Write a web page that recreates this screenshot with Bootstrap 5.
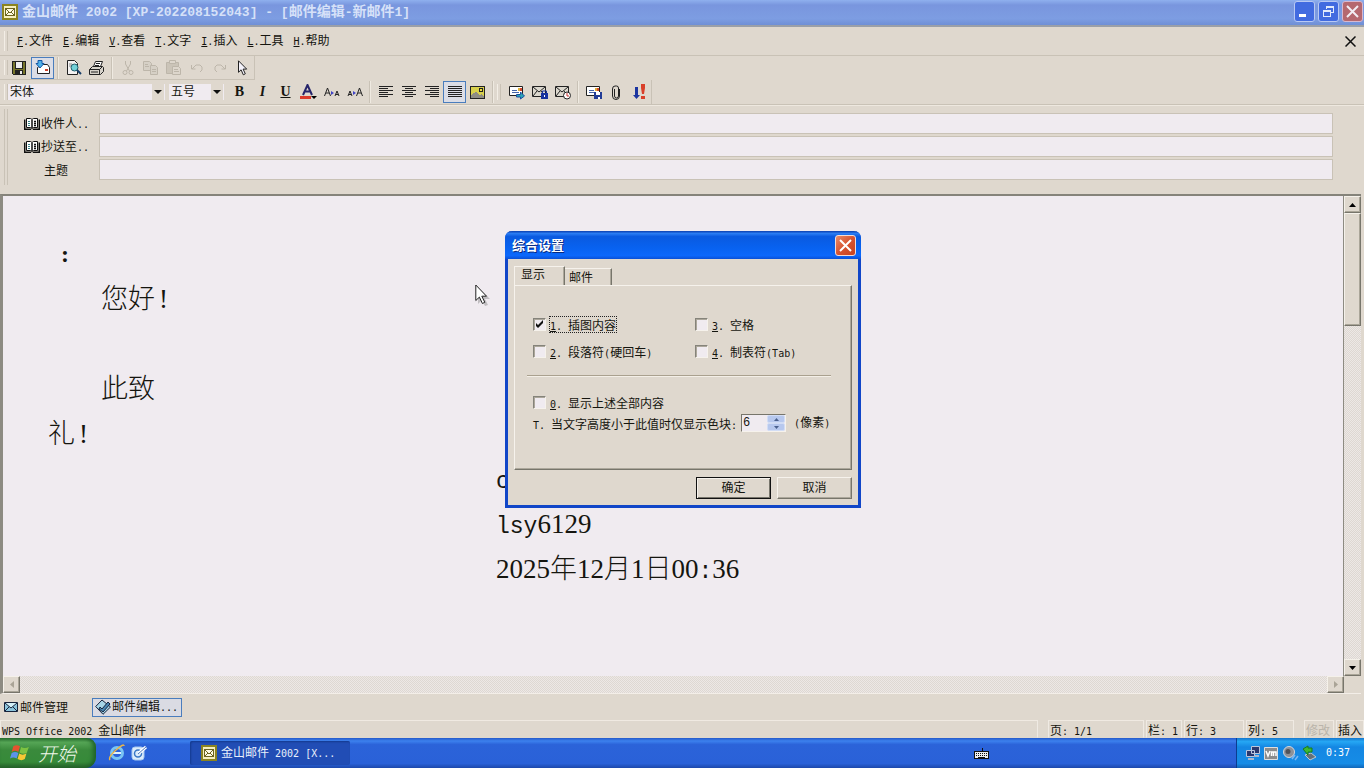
<!DOCTYPE html>
<html lang="zh-CN">
<head>
<meta charset="utf-8">
<meta name="viewport" content="width=device-width, initial-scale=1">
<title>金山邮件 2002</title>
<link href="https://cdn.jsdelivr.net/npm/bootstrap@5.3.0/dist/css/bootstrap.min.css" rel="stylesheet">
<style>
:root{--face:#dfd8ce;--paper:#f0ebf0;--line:#c9c2b6;--ink:#15150f}
body{background:var(--face);color:var(--ink);font:12px/16px "Noto Sans CJK SC",sans-serif;overflow:hidden}
button,input,select{font:inherit;color:inherit;border:0;padding:0;border-radius:0;background:none}
svg{display:block;flex:none}
.px{shape-rendering:crispEdges}
.la{font-family:"DejaVu Sans Mono","Liberation Mono",monospace;font-size:10px;white-space:pre}
/* window frame */
.title-main{height:27px;background:linear-gradient(#8fb0ee,#7996de 20%,#7d9de2 75%,#6f8fd6);border-bottom:2px solid #9a9fa8;color:#d6e1f8;padding:0 1px 2px 2px;font-size:14px;font-weight:700}
.title-main .la{font-family:"Liberation Mono",monospace;font-size:13px}
.cap{width:21px;height:21px;border:1px solid #b9c9f3;border-radius:3px;background:#426be0}
.cap-x{background:#b5686f;border-color:#d7b8cf}
.menu-row{height:29px;border-bottom:1px solid var(--line);padding:0 4px 0 4px}
.menu-row a{color:inherit;text-decoration:none;white-space:nowrap}
.menu-row nav{gap:10px;padding-left:9px}
.grip{width:4px;border-left:1px solid #f3eee6;border-right:1px solid var(--line);align-self:stretch;margin:4px 0}
.bars{border-bottom:1px solid var(--line);box-shadow:0 1px #eee8df}
.tools{height:24px;border-bottom:1px solid var(--line);border-right:1px solid var(--line);padding-left:4px}
.tool{width:23px;height:22px;display:flex;align-items:center;justify-content:center;flex:none}
.tool.on{background:#dbdde6;border:1px solid #4a7dbd}
.tool.off{color:#bdb6aa}
.vsep{width:1px;height:22px;background:#efeae1;border-left:1px solid var(--line);box-sizing:content-box;margin:0 3px}
.combo{position:relative;background:var(--paper);height:16px}
.combo select{appearance:none;width:100%;height:16px;line-height:14px;padding:0 14px 2px 2px;display:block}
.combo::after{content:"";position:absolute;right:1px;top:0;width:12px;height:16px;background:var(--face);pointer-events:none}
.combo::before{content:"";position:absolute;z-index:1;right:3px;top:6px;border:4px solid transparent;border-top-color:#111;border-bottom:0}
.glyph{font-family:"Liberation Serif",serif;font-size:14px;font-weight:700;line-height:16px}
/* addresses */
.addr{height:89px;padding:4px 31px 9px 4px}
.addr .grip{margin:0;border-color:#f3eee6 var(--line)}
.addr-grid{display:grid;grid-template-columns:75px 1fr;align-content:start;gap:2px 0;padding:4px 0 0 16px}
.addr-grid input{height:21px;width:100%;background:var(--paper);border:1px solid var(--line)}
.addr-grid button,.addr-grid label{height:21px;display:flex;align-items:center;gap:1px;white-space:nowrap}
/* editor */
.editor{margin:0 3px 0 0;border-top:2px solid #85837a;border-left:3px solid #8d8b82;border-bottom:1px solid #f3eee8;min-height:0}
.paper{background:var(--paper);font-family:"Liberation Serif","Noto Sans CJK SC",serif;font-size:27px;line-height:45px;font-weight:300;padding:36px 0 0 45px;overflow:hidden;border-right:1px solid #8d8b82}
.paper p{margin:0;height:45px;white-space:pre}
.paper .tt{font-family:"Liberation Mono",monospace;font-size:23px}
.paper .salute{font-size:24px;padding-left:13px;font-weight:700}
.ind{padding-left:53px}
.sign{padding-left:448px}
.track{background:repeating-conic-gradient(#ded8d2 0 25%,#ede8e6 0 50%) 0 0/2px 2px}
.sb{width:17px;height:17px;background:var(--face);border:1px solid;border-color:#f5f1ea #77756b #77756b #f5f1ea;box-shadow:inset -1px -1px #aaa598;display:flex;align-items:center;justify-content:center;flex:none}
.thumb{height:113px}
.tabs-row{height:26px;padding:0 4px}
.tabs-row a{color:inherit;text-decoration:none;height:19px}
.tabs-row .on{width:90px;border:1px solid #4a7dbd;background:#dadbe3;margin-left:24px;padding-left:2px}
.status{height:18px;gap:2px;line-height:17px}
.cell{border:1px solid;border-color:#f0eae2 #efeae3 transparent #efeae3;height:18px;padding-left:1px;white-space:pre;overflow:hidden}
/* taskbar */
.task{height:30px;background:linear-gradient(#2459c9,#3c81ee 10%,#2b63d9 22%,#2a61d8 85%,#1d48ab);color:#fff}
.start{width:96px;height:30px;border-radius:0 9px 11px 0;background:linear-gradient(#2f7734,#56a656 14%,#3a8a3c 40%,#368a39 80%,#276129);box-shadow:inset -3px 0 4px #1f6228;font-size:19px;font-style:italic;font-weight:300;color:#f1f8ec;padding-left:10px;gap:8px}
.task-btn{width:160px;height:24px;background:#214db5;border-radius:2px;box-shadow:inset 1px 1px 2px #143a8e;margin-left:42px;padding-left:11px;gap:4px;white-space:nowrap;color:#e8f0fb}
.tray{width:128px;background:linear-gradient(#1577cd,#25a7f4 12%,#1487e3 30%,#168ce6 85%,#1167b9);border-left:1px solid #0b3d90;padding:0 14px 0 8px;gap:3px}
/* dialog */
.layer{position:absolute;inset:0;display:flex;align-items:center;justify-content:center;padding-left:2px;pointer-events:none}
.dlg{pointer-events:auto;width:356px;background:var(--face);border:3px solid #1146c8;border-top:0;border-radius:7px 7px 0 0}
.dlg-title{height:28px;margin:0 -3px;padding:1px 5px 0 7px;border-radius:7px 7px 0 0;background:linear-gradient(#0b3fae,#2a7cf3 9%,#0a5ae0 20%,#0862f0 60%,#0c68fb 88%,#0a50d6);color:#fff;font-size:13px;font-weight:700;text-shadow:1px 1px #0a2a80}
.dlg-x{width:21px;height:21px;border:1px solid #f4dcd6;border-radius:3px;background:linear-gradient(135deg,#ea8c68,#d75431 50%,#c8421e)}
.dlg-body{padding:7px 6px 6px}
.pick{height:19px}
.pick button{border:1px solid;border-color:#f6f2ec #77756b transparent #f6f2ec;box-shadow:inset -1px 0 #aca79b;border-bottom:0;text-align:left;line-height:14px;padding-left:6px}
.pick .cur{width:51px;height:19px;padding-bottom:3px}
.pick .alt{width:47px;height:17px;padding-left:4px;border-left:0}
.pane{height:185px;border:1px solid;border-color:#f6f2ec #77756b #77756b #f6f2ec;box-shadow:inset -1px -1px #aca79b;padding:25px 20px 0 12px}
.opts{padding-left:6px}
.opt{display:flex;align-items:center;gap:4px;height:27px;white-space:nowrap}
.opt.low{height:21px}
.opt label{height:15px;line-height:15px;white-space:pre}
.opt input[type=checkbox]{appearance:none;width:13px;height:13px;background:var(--paper);border:1px solid;border-color:#85837a #f6f2ec #f6f2ec #85837a;box-shadow:inset 1px 1px #aca79b;margin:0}
.opt input[type=checkbox]:checked{background:url("data:image/svg+xml,%3Csvg xmlns='http://www.w3.org/2000/svg' viewBox='0 0 11 11'%3E%3Cpath d='M2 4v3l2 2 5-5V1L4 6z' fill='%23111'/%3E%3C/svg%3E") var(--paper)}
.opt .focus{outline:1px dotted #222}
.rule{height:2px;background:#aaa18f;border-bottom:1px solid #f4efe7;margin:10px 0 15px}
.spin{width:45px;height:18px;border:1px solid;border-color:#77756b #f6f2ec #f6f2ec #77756b;background:var(--paper)}
.spin input{width:25px;height:15px;padding-left:1px;appearance:textfield;min-width:0;font-family:"Liberation Mono",monospace;font-size:12px}
.spin input::-webkit-inner-spin-button{appearance:none}
.spin button{width:18px;height:8px;background:#b7c8ee;border:1px solid #d2ddf5;border-radius:2px;display:flex;align-items:center;justify-content:center}
.push{width:75px;height:22px;line-height:18px;padding-bottom:2px;background:var(--face);border:1px solid;border-color:#f6f2ec #77756b #77756b #f6f2ec;box-shadow:inset -1px -1px #aca79b}
.push.def{border-color:#111;box-shadow:inset 1px 1px #f6f2ec,inset -1px -1px #77756b}
.pointer{position:absolute;left:475px;top:284px}
</style>
</head>
<body class="d-flex flex-column vh-100">
<svg width="0" height="0" class="position-absolute" aria-hidden="true">
<symbol id="mail" viewBox="0 0 16 16"><path fill="#8b8420" d="M0 0h16v16H0z"/><path fill="#f6efbf" d="M2 2h12v12H2z"/><path fill="#fffbe2" stroke="#6b6420" d="M3.500 4.500h9v7h-9z"/><path fill="none" stroke="#6b6420" d="M4 5l4 4 4-4M4 11l3-3M12 11L9 8"/></symbol>
<symbol id="book" viewBox="0 0 16 13"><path fill="#fff" stroke="#111" d="M2.500 1.500h4l1.500 1 1.500-1h4v9h-4l-1.500 1-1.500-1h-4z"/><path stroke="#111" stroke-width="1.500" fill="none" d="M.7 2.500v9.800h6.500M15.300 2.500v9.800H8.800M8 3v8M10 4.500h2M10 6.500h2M10 8.500h2"/><path stroke="#39838a" d="M4 4.500h2M4 6.500h2M4 8.500h2"/></symbol>
<symbol id="cut" viewBox="0 0 16 16"><path fill="none" stroke="currentColor" d="M5.500 1v3l4 7M10.500 1v3l-4 7"/><circle cx="5" cy="12.500" r="2" fill="none" stroke="currentColor"/><circle cx="11" cy="12.500" r="2" fill="none" stroke="currentColor"/></symbol>
<symbol id="env" viewBox="0 0 16 14"><path fill="#dcd8ce" stroke="#222" d="M.5 1.500h13v10H.5z"/><path fill="none" stroke="#222" d="M1 2l6 5 6-5M1 11l4-5M13 11L9 6"/></symbol>
<symbol id="letter" viewBox="0 0 16 14"><path fill="#fff" stroke="#222" d="M.5 1.500h13v9H.5z"/><path stroke="#4665a8" d="M3 5.500h5M3 7.500h7"/><path fill="#e0b23a" d="M9 3h2v3H9z"/><path fill="#d4482c" d="M11 3h2v3h-2z"/></symbol>
</svg>

<main class="d-flex flex-column flex-grow-1 position-relative" style="min-height:0">
<header class="title-main d-flex align-items-center">
<svg width="16" height="16" class="px"><use href="#mail"/></svg>
<span class="ps-1 text-nowrap">金山邮件<span class="la"> 2002 [XP-202208152043] - [</span>邮件编辑<span class="la">-</span>新邮件<span class="la">1]</span></span>
<div class="ms-auto d-flex" style="gap:3px">
<button class="cap" aria-label="最小化"><svg width="19" height="19"><path fill="#fff" d="M4 12h7v3H4z"/></svg></button>
<button class="cap" aria-label="还原"><svg width="19" height="19" class="px" fill="none" stroke="#e2eafb"><path d="M7.500 7V4.500h7v6H12M7 5h8"/><path d="M4.500 8.500h7v6h-7zM4 9h8"/></svg></button>
<button class="cap cap-x" aria-label="关闭"><svg width="19" height="19"><path stroke="#f3edf3" stroke-width="2" d="M4 4l11 11M15 4L4 15"/></svg></button>
</div>
</header>

<div class="menu-row d-flex align-items-center">
<span class="grip"></span>
<nav class="d-flex">
<a href="#"><span class="la"><u>F</u>.</span>文件</a><a href="#"><span class="la"><u>E</u>.</span>编辑</a><a href="#"><span class="la"><u>V</u>.</span>查看</a><a href="#"><span class="la"><u>T</u>.</span>文字</a><a href="#"><span class="la"><u>I</u>.</span>插入</a><a href="#"><span class="la"><u>L</u>.</span>工具</a><a href="#"><span class="la"><u>H</u>.</span>帮助</a>
</nav>
<button class="ms-auto p-1" aria-label="关闭文档"><svg width="11" height="11"><path stroke="#111" stroke-width="1.500" d="M.5.5l10 10M10.500.5l-10 10"/></svg></button>
</div>

<div class="bars d-flex flex-column align-items-start">
<div class="tools d-flex align-items-center">
<span class="grip"></span>
<button class="tool" aria-label="保存"><svg class="px" width="15" height="14"><path fill="#222" d="M0 0h14v14H1l-1-1z"/><path fill="#77762c" d="M1 1h2v7h8V1h2v12h-2V9H3v4H1z"/><path fill="#eee" d="M4 1h6v6H4zM8 10h2v3H8z"/></svg></button>
<button class="tool on" aria-label="发送"><svg width="16" height="16"><path fill="#fff" stroke="#222" d="M2.500 7.500l5-3h5l2 3v6h-12z"/><path fill="#4fb1ea" stroke="#1558a5" d="M3 .5h4v3h2L5 8 1 3.500h2z"/><path fill="#ce432c" d="M10 9h3v2h-3z"/></svg></button>
<span class="vsep"></span>
<button class="tool" aria-label="打印预览"><svg width="17" height="17"><path fill="#f4f2f2" stroke="#222" d="M2.500 1.500h7l3 3v11h-10z"/><path d="M4 5h3M4 7h2" stroke="#888"/><circle cx="9.500" cy="8.500" r="3.500" fill="#72d1d8" stroke="#225d6b"/><path stroke="#163d68" stroke-width="2" d="M12 11l4 4"/></svg></button>
<button class="tool" aria-label="打印"><svg width="17" height="16" stroke="#222"><path fill="#fff" d="M5.500 6.500l2-5h7l-2 5"/><path fill="#d6d2ca" d="M1.500 9.500l3-3h10l1 1v4l-3 3h-11z"/><path fill="none" d="M1.500 9.500h10l3-3M11.500 9.500v5M3 12h7M8 3.500h4M7 5.500h4"/></svg></button>
<span class="vsep"></span>
<button class="tool off" aria-label="剪切"><svg width="16" height="16"><use href="#cut"/></svg></button>
<button class="tool off" aria-label="复制"><svg width="16" height="14" stroke="currentColor" fill="#d6d0c6"><path d="M.5.5h6l2 2v7h-8zM2 3.500h3M2 5.500h4"/><path d="M7.500 4.500h5l2 2v7h-7zM9 8.500h4M9 10.500h4"/></svg></button>
<button class="tool off" aria-label="粘贴"><svg width="16" height="15" stroke="currentColor"><path fill="#cbc4b8" d="M.5 2.500h12v11H.5z"/><path fill="#ddd6cc" d="M3.500.5h6v3h-6zM6.500 6.500h6l2 2v6h-8zM8 9.500h4M8 11.500h5"/></svg></button>
<button class="tool off" aria-label="撤消"><svg width="14" height="10" fill="none" stroke="currentColor"><path d="M1.500 2v4h4M2 6l4-4h4l2 2v3l-2 2"/></svg></button>
<button class="tool off" aria-label="重做"><svg width="14" height="10" fill="none" stroke="currentColor"><path d="M12.500 2v4h-4M12 6L8 2H4L2 4v3l2 2"/></svg></button>
<button class="tool" aria-label="选择"><svg width="11" height="16"><path fill="#f4f2fa" stroke="#222" d="M1.500.8v11.500l2.600-2.500 2.200 5 2-1-2.200-4.700h3.600z"/></svg></button>
</div>
<div class="tools d-flex align-items-center border-bottom-0">
<span class="grip"></span>
<div class="combo" style="width:157px"><select aria-label="字体"><option>宋体</option></select></div>
<div class="combo ms-1" style="width:55px"><select aria-label="字号"><option>五号</option></select></div>
<button class="tool glyph ms-1">B</button><button class="tool glyph fst-italic">I</button><button class="tool glyph text-decoration-underline">U</button>
<button class="tool" aria-label="字体颜色"><svg width="17" height="16"><path fill="none" stroke="#26256b" stroke-width="2" d="M3 11L7.500 1 12 11M5 7.500h5"/><path fill="#db3a2b" d="M0 12h11v3H0z"/><path d="M11 12h6l-3 3z"/></svg></button>
<button class="tool" aria-label="缩小文字"><svg width="16" height="10" fill="none" stroke="#222"><path d="M.5 9l3-8 3 8M2 6h3M11 9l2-5 2 5M12 7.500h2"/><path fill="#4043c8" stroke="none" d="M7 4l3 2-3 2z"/></svg></button>
<button class="tool" aria-label="放大文字"><svg width="16" height="10" fill="none" stroke="#222"><path d="M9.500 9l3-8 3 8M11 6h3M1 9l2-5 2 5M2 7.500h2"/><path fill="#4043c8" stroke="none" d="M6 4l3 2-3 2z"/></svg></button>
<span class="vsep"></span>
<button class="tool" aria-label="左对齐"><svg class="px" width="14" height="12" stroke="#222"><path d="M0 .5h14M0 2.500h9M0 4.500h14M0 6.500h9M0 8.500h14M0 10.500h9"/></svg></button>
<button class="tool" aria-label="居中"><svg class="px" width="14" height="12" stroke="#222"><path d="M0 .5h14M3 2.500h8M0 4.500h14M3 6.500h8M0 8.500h14M3 10.500h8"/></svg></button>
<button class="tool" aria-label="右对齐"><svg class="px" width="14" height="12" stroke="#222"><path d="M0 .5h14M5 2.500h9M0 4.500h14M5 6.500h9M0 8.500h14M5 10.500h9"/></svg></button>
<button class="tool on" aria-label="两端对齐"><svg class="px" width="14" height="12" stroke="#222"><path d="M0 .5h14M0 2.500h14M0 4.500h14M0 6.500h14M0 8.500h14M0 10.500h14"/></svg></button>
<button class="tool" aria-label="图片"><svg class="px" width="15" height="13"><path fill="#d8d04c" stroke="#222" d="M.5.5h14v12H.5z"/><path fill="#8e8c84" d="M1 12v-3l5-3 4 3 2-1 2 3v1z"/><path fill="#eee03f" stroke="#222" d="M9.500 2.500h3v3h-3z"/></svg></button>
<span class="vsep"></span>
<span class="grip me-1"></span>
<button class="tool" aria-label="发送邮件"><svg width="16" height="15"><use href="#letter" width="16" height="14"/><path fill="#2aa6b4" stroke="#1c4fa4" d="M7.500 9.500h4V7l4 4-4 3v-2h-4z"/></svg></button>
<button class="tool" aria-label="加密"><svg width="16" height="15"><use href="#env" width="16" height="14"/><path fill="none" stroke="#17329f" d="M10.500 8V6h4v3"/><path fill="#17329f" d="M9 8h7v6H9z"/><path fill="#fff" d="M12 10h1v2h-1z"/></svg></button>
<button class="tool" aria-label="定时"><svg width="16" height="15"><use href="#env" width="16" height="14"/><circle cx="12" cy="10.500" r="3.500" fill="#fff" stroke="#222"/><path stroke="#c33" d="M12 8v3h2" fill="none"/></svg></button>
<span class="vsep"></span>
<button class="tool" aria-label="保存邮件"><svg width="16" height="15"><use href="#letter" width="16" height="14"/><path fill="#223c96" d="M8 7h8v7H8z"/><path fill="#fff" d="M10 7h4v3h-4zM12 12h2v2h-2z"/></svg></button>
<button class="tool" aria-label="附件"><svg width="9" height="15" fill="none" stroke="#222"><path d="M2.500 4v7q0 2 2 2t2-2V3q0-2-2-2H3Q.5 1 .5 4v7q0 3.500 3.500 3.500T7.500 11V4"/></svg></button>
<button class="tool" aria-label="优先级"><svg width="14" height="16"><path fill="#1c35a0" d="M2 3h3v8h2l-3.500 4L0 11h2z"/><path fill="#d9402a" d="M8 0h4v4l-1 6H9L8 4zM8 12h4v3H8z"/></svg></button>
</div>
</div>

<section class="addr d-flex">
<span class="grip"></span>
<div class="addr-grid flex-grow-1">
<button type="button"><svg width="16" height="13"><use href="#book"/></svg><span>收件人<span class="la">..</span></span></button><input aria-label="收件人">
<button type="button"><svg width="16" height="13"><use href="#book"/></svg><span>抄送至<span class="la">..</span></span></button><input aria-label="抄送至">
<label for="subj" style="padding-left:20px">主题</label><input id="subj">
</div>
</section>

<section class="editor d-flex flex-column flex-grow-1">
<div class="d-flex flex-grow-1" style="min-height:0">
<article class="paper flex-grow-1">
<p class="salute">:</p>
<p class="ind">您好<span class="ps-1">!</span></p>
<p></p>
<p class="ind">此致</p>
<p>礼<span class="ps-1">!</span></p>
<p class="sign"><span class="tt">c</span></p>
<p class="sign"><span class="tt">lsy</span>6129</p>
<p class="sign">2025年12月1日00<span class="tt">:</span>36</p>
</article>
<div class="track d-flex flex-column">
<button class="sb" aria-label="向上"><svg width="7" height="4"><path d="M0 4h7L3.500 0z"/></svg></button>
<span class="sb thumb"></span>
<button class="sb mt-auto" aria-label="向下"><svg width="7" height="4"><path d="M0 0h7L3.500 4z"/></svg></button>
</div>
</div>
<div class="d-flex">
<div class="track d-flex flex-grow-1 justify-content-between">
<button class="sb" aria-label="向左"><svg width="4" height="7"><path fill="#aaa497" d="M4 0v7L0 3.500z"/></svg></button>
<button class="sb" aria-label="向右"><svg width="4" height="7"><path fill="#aaa497" d="M0 0v7l4-3.500z"/></svg></button>
</div>
<span style="width:17px"></span>
</div>
</section>

<nav class="tabs-row d-flex align-items-center">
<a href="#" class="d-flex align-items-center"><svg width="16" height="12"><path fill="#8cc5dd" stroke="#16233c" d="M.5 1.500h13v9H.5z"/><path fill="#d3f0f8" stroke="#16233c" d="M1 2l6 5 6-5M1 10l4-4M13 10L9 6"/></svg>邮件管理</a>
<a href="#" class="on d-flex align-items-center"><svg width="17" height="16"><path fill="#a6d5e6" stroke="#16233c" d="M.7 7.500L7 1l8.500 7L8 15.300z"/><path fill="#4a87b1" stroke="#16233c" d="M5 8l2 2 6-7 2 2-7 8-4-3z"/></svg><span class="text-nowrap">邮件编辑<span class="la">...</span></span></a>
</nav>

<footer class="status d-flex">
<div class="cell flex-grow-1 me-2"><span class="la">WPS Office 2002 </span>金山邮件</div>
<div class="cell" style="width:96px">页<span class="la">: 1/1</span></div>
<div class="cell" style="width:36px">栏<span class="la">: 1</span></div>
<div class="cell" style="width:60px">行<span class="la">: 3</span></div>
<div class="cell me-2" style="width:48px">列<span class="la">: 5</span></div>
<div class="cell" style="width:30px;color:#bab4aa">修改</div>
<div class="cell" style="width:28px">插入</div>
</footer>

<div class="layer">
<form class="dlg" role="dialog" aria-labelledby="dt">
<div class="dlg-title d-flex align-items-center justify-content-between"><span id="dt">综合设置</span>
<button type="button" class="dlg-x" aria-label="关闭"><svg width="19" height="19"><path stroke="#fff" stroke-width="2" d="M4 4l11 11M15 4L4 15"/></svg></button></div>
<div class="dlg-body">
<div class="pick d-flex align-items-end" role="tablist"><button type="button" class="cur" role="tab">显示</button><button type="button" class="alt" role="tab">邮件</button></div>
<div class="pane">
<div class="opts d-grid" style="grid-template-columns:162px 1fr">
<div class="opt"><input type="checkbox" id="o1" checked><label for="o1" class="focus"><span class="la"><u>1</u>. </span>插图内容</label></div>
<div class="opt"><input type="checkbox" id="o3"><label for="o3"><span class="la"><u>3</u>. </span>空格</label></div>
<div class="opt"><input type="checkbox" id="o2"><label for="o2"><span class="la"><u>2</u>. </span>段落符<span class="la">(</span>硬回车<span class="la">)</span></label></div>
<div class="opt"><input type="checkbox" id="o4"><label for="o4"><span class="la"><u>4</u>. </span>制表符<span class="la">(Tab)</span></label></div>
</div>
<div class="rule"></div>
<div class="opts">
<div class="opt low"><input type="checkbox" id="o0"><label for="o0"><span class="la"><u>0</u>. </span>显示上述全部内容</label></div>
<div class="opt low"><label for="sp"><span class="la">T. </span>当文字高度小于此值时仅显示色块<span class="la">:</span></label>
<span class="spin d-flex"><input type="number" id="sp" value="6"><span><button type="button" aria-label="增加"><svg width="5" height="3"><path fill="#4b618f" d="M0 3h5L2.500 0z"/></svg></button><button type="button" aria-label="减少"><svg width="5" height="3"><path fill="#4b618f" d="M0 0h5L2.500 3z"/></svg></button></span></span>
<span class="ps-1"><span class="la">(</span>像素<span class="la">)</span></span></div>
</div>
</div>
<div class="d-flex justify-content-end" style="gap:6px;margin-top:7px"><button type="button" class="push def">确定</button><button type="button" class="push">取消</button></div>
</div>
</form>
</div>
<svg class="pointer" width="16" height="22"><path fill="#777" opacity=".4" d="M3 3v17l4-4 3 6 3-1-3-6h5z"/><path fill="#fff" stroke="#222" d="M.8 1v15.500l3.600-3.400 3 6.400 2.400-1.200-3-6.100h4.700z"/></svg>
</main>

<footer class="task d-flex align-items-center">
<button class="start d-flex align-items-center"><svg width="20" height="20" viewBox="0 0 18 18"><path fill="#e5532f" d="M3 3q3-2 6 0L7.500 8q-3-2-6 0z"/><path fill="#7cc242" d="M10 3.500q3 2 7 0L15 9q-3 1.500-6.500-.5z"/><path fill="#5d93ea" d="M1.500 9q3-2 6 0L6 14q-3-2-6 0z"/><path fill="#f7c835" d="M8.300 9.500q3 2 6.500 0l-1.500 5q-3 2-6.500 0z"/></svg>开始</button>
<svg width="18" height="18" style="margin-left:12px" fill="none"><circle cx="9" cy="9" r="5.500" stroke="#79c5f4" stroke-width="3"/><path stroke="#dff2fc" stroke-width="2" d="M5 9h8"/><path stroke="#eab64a" stroke-width="1.500" d="M2 16Q0 13 8 6t8-4"/></svg>
<svg width="18" height="18" class="ms-1"><rect x="2" y="3" width="12" height="13" rx="3" fill="#dcecfb" stroke="#a5c8f0"/><circle cx="8" cy="9.500" r="3.500" fill="none" stroke="#3978c6" stroke-width="1.500"/><path stroke="#fff" stroke-width="3" d="M9 9l7-6"/><path stroke="#4e7bbd" d="M8 10l8-7"/></svg>
<button class="task-btn d-flex align-items-center"><svg width="16" height="16" class="px"><use href="#mail"/></svg><span>金山邮件<span class="la"> 2002 [X...</span></span></button>
<svg class="px ms-auto" style="margin-right:246px" width="16" height="12"><path fill="#eee" stroke="#111" d="M.5 4.500h14v7H.5zM8.500 4V1"/><path stroke="#111" stroke-dasharray="1 1" d="M2 6.500h11M2 8.500h11"/><path stroke="#111" d="M4 10h7"/></svg>
<div class="tray d-flex align-items-center align-self-stretch">
<svg width="16" height="16"><path fill="#29386e" stroke="#b9c6dc" d="M6.500 1.500h8v7h-8zM1.500 5.500h8v6h-8z"/><path fill="#aab7ca" d="M3 13h6v2H3zM10 10h4v2h-4z"/></svg>
<svg width="15" height="15"><path fill="#8c8c8c" stroke="#dedede" d="M.5 1.500h13v12H.5z"/><path fill="none" stroke="#fff" stroke-width="1.500" d="M2 5l2 5 2-5M7.500 10V6h2v4m0-4h2.500v4"/></svg>
<svg width="17" height="16"><circle cx="7" cy="7" r="5.500" fill="#8d9198" stroke="#d5d8de"/><circle cx="6" cy="6.500" r="2.500" fill="#50535a"/><path fill="none" stroke="#7cb7f2" stroke-width="1.500" d="M10 14l3-4M13 15l3-4"/></svg>
<svg width="15" height="16"><path fill="#65707a" stroke="#bcc8cf" d="M3 10l6-2 5 4-6 3z"/><path fill="#3fb932" stroke="#187d1e" d="M1 4l5-3v2h4v4H6v3z"/></svg>
<span class="la ms-auto text-white">0:37</span>
</div>
</footer>
<script src="https://cdn.jsdelivr.net/npm/bootstrap@5.3.0/dist/js/bootstrap.bundle.min.js"></script>
</body>
</html>
